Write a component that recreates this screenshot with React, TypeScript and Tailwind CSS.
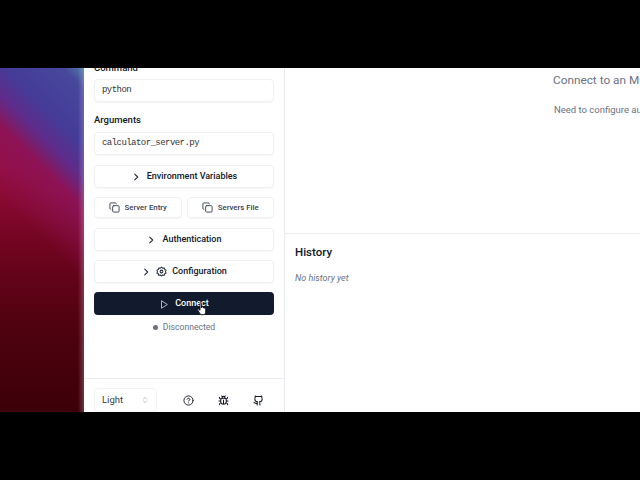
const font = "[font-family:'Roboto',sans-serif]";

function Chevron() {
  return (
    <svg width="10" height="10" viewBox="0 0 24 24" fill="none" stroke="#1f2937" strokeWidth="2.6" strokeLinecap="round" strokeLinejoin="round">
      <path d="m9 5 7 7-7 7" />
    </svg>
  );
}

function Copy() {
  return (
    <svg width="11" height="11" viewBox="0 0 24 24" fill="none" stroke="#374151" strokeWidth="2" strokeLinecap="round" strokeLinejoin="round">
      <rect x="8" y="8" width="14" height="14" rx="2" />
      <path d="M4 16c-1.100 0-2-.9-2-2V4c0-1.100.9-2 2-2h10c1.100 0 2 .9 2 2" />
    </svg>
  );
}

function Cog() {
  return (
    <svg width="11" height="11" viewBox="0 0 24 24" fill="none" stroke="#1f2937" strokeWidth="2.200" strokeLinecap="round" strokeLinejoin="round">
      <path d="M12 2.500l2.600 2.300 3.400-.6.900 3.300 3.100 1.500-1.200 3.200 1.200 3.200-3.100 1.500-.9 3.300-3.400-.6-2.600 2.300-2.600-2.300-3.400.6-.9-3.300-3.100-1.500 1.200-3.200-1.200-3.200 3.100-1.500.9-3.300 3.400.6z" />
      <circle cx="12" cy="12" r="3" />
    </svg>
  );
}

function Field({ value }: { value: string }) {
  return (
    <div className="h-[23px] rounded border border-[#eef0f2] shadow-[0_1px_1px_rgba(0,0,0,0.04)] flex items-center px-[7px] pt-[1px] font-['Liberation_Mono',monospace] text-[9px] tracking-[-0.55px] text-[#333]">
      {value}
    </div>
  );
}

function Collapsible({ children }: { children: React.ReactNode }) {
  return (
    <div className="h-[23px] rounded border border-[#eef0f2] shadow-[0_1px_1px_rgba(0,0,0,0.04)] flex items-center justify-center text-[9px] font-medium text-[#111827]">
      {children}
    </div>
  );
}

function Hand() {
  return (
    <svg className="absolute left-[197px] top-[302px]" width="10" height="14" viewBox="0 0 10 14">
      <path d="M3 1.200c.5-.6 1.300-.4 1.400.4V6l.3-1c.6-.4 1.200-.3 1.400.3l.2.6c.6-.3 1.100-.1 1.300.4.6-.2 1.100.2 1.100.8v3c0 1.500-.9 2.600-2.400 2.600H5C3.800 12.700 3.200 12 2.500 11L.7 8c-.3-.6.4-1.200 1-.8L3 8.300z" fill="#fff" stroke="#111" strokeWidth="0.9" />
    </svg>
  );
}

export default function App() {
  return (
    <div className={`relative w-[640px] h-[480px] bg-black overflow-hidden flex flex-col ${font}`}>
      <div className="h-[68px] shrink-0 bg-black" />
      <div className="relative h-[344px] shrink-0 flex bg-white overflow-hidden">
        <div className="w-[84px] shrink-0 relative bg-[linear-gradient(225deg,#4a7fa8_0%,#47489c_5%,#443c98_18%,#5f2c8a_26%,rgba(140,20,90,0.85)_33%,rgba(150,10,60,0)_50%),linear-gradient(180deg,#96124f_0%,#960c3c_30%,#70041f_52%,#4f0210_75%,#3c0008_100%)]">
          <div className="absolute inset-y-0 right-0 w-[6px] bg-[linear-gradient(90deg,rgba(200,190,210,0)_0%,rgba(200,190,210,0.3)_100%)]" />
        </div>
        <aside className="w-[201px] shrink-0 border-r border-[#e8eaed] flex flex-col bg-white">
          <div className="h-[310px] shrink-0 overflow-hidden px-[10px] flex flex-col">
            <div className="-mt-[7px] text-[9.5px] font-medium text-[#111827] h-[14px] leading-[14px]">Command</div>
            <div className="mt-[4px]"><Field value="python" /></div>
            <div className="mt-[11px] text-[9.5px] font-medium text-[#111827] h-[14px] leading-[14px]">Arguments</div>
            <div className="mt-[5px]"><Field value="calculator_server.py" /></div>
            <div className="mt-[10px]">
              <Collapsible>
                <span className="flex items-center gap-[6px]"><Chevron />Environment Variables</span>
              </Collapsible>
            </div>
            <div className="mt-[9px] grid grid-cols-2 gap-[5px]">
              <div className="h-[21px] rounded border border-[#eef0f2] shadow-[0_1px_1px_rgba(0,0,0,0.04)] flex items-center justify-center gap-[5px] text-[7.8px] font-medium text-[#374151]"><Copy />Server Entry</div>
              <div className="h-[21px] rounded border border-[#eef0f2] shadow-[0_1px_1px_rgba(0,0,0,0.04)] flex items-center justify-center gap-[5px] text-[7.8px] font-medium text-[#374151]"><Copy />Servers File</div>
            </div>
            <div className="mt-[10px]">
              <Collapsible>
                <span className="flex items-center gap-[6px]"><Chevron />Authentication</span>
              </Collapsible>
            </div>
            <div className="mt-[9px]">
              <Collapsible>
                <span className="flex items-center gap-[5px]"><Chevron /><Cog />Configuration</span>
              </Collapsible>
            </div>
            <div className="mt-[9px] h-[23px] pt-[1px] rounded bg-[#111b2d] flex items-center justify-center gap-[6px] text-[9px] font-medium text-white">
              <svg width="10" height="11" viewBox="0 0 24 24" fill="none" stroke="#d1d5db" strokeWidth="2" strokeLinejoin="round">
                <path d="M6 3l14 9-14 9z" />
              </svg>
              Connect
            </div>
            <div className="mt-[6px] flex items-center justify-center gap-[5px] text-[8.6px] text-[#6b7280] h-[12px]">
              <span className="w-[5px] h-[5px] rounded-full bg-[#6b7280]" />
              Disconnected
            </div>
          </div>
          <div className="flex-1 border-t border-[#e8eaed] px-[10px] pt-[9px] flex items-start">
            <div className="w-[63px] h-[24px] rounded border border-[#f1f3f5] shadow-[0_1px_1px_rgba(0,0,0,0.04)] flex items-center justify-between px-[7px] text-[9.5px] text-[#374151]">
              Light
              <svg width="8" height="10" viewBox="0 0 24 24" fill="none" stroke="#9ca3af" strokeWidth="2" strokeLinecap="round" strokeLinejoin="round">
                <path d="m7 15 5 5 5-5M7 9l5-5 5 5" />
              </svg>
            </div>
            <div className="ml-[26px] mt-[1px] flex items-center gap-[24px] h-[22px]">
              <svg width="11" height="11" viewBox="0 0 24 24" fill="none" stroke="#111827" strokeWidth="2" strokeLinecap="round" strokeLinejoin="round">
                <circle cx="12" cy="12" r="10" />
                <path d="M9.100 9a3 3 0 0 1 5.800 1c0 2-3 3-3 3M12 17h.01" />
              </svg>
              <svg width="11" height="11" viewBox="0 0 24 24" fill="none" stroke="#111827" strokeWidth="2.200" strokeLinecap="round" strokeLinejoin="round">
                <path d="M8 2l1.900 1.900M16 2l-1.900 1.900M9 7.100V6a3 3 0 1 1 6 0v1.100" />
                <path d="M12 20c-3.300 0-6-2.700-6-6v-3a4 4 0 0 1 4-4h4a4 4 0 0 1 4 4v3c0 3.300-2.700 6-6 6zM12 20v-9M6.500 9C4.600 8.800 3 7.100 3 5M6 13H2M3 21c0-2.100 1.700-3.900 3.800-4M21 5c0 2.100-1.600 3.800-3.500 4M22 13h-4M17.200 17c2.100.1 3.800 1.900 3.800 4" />
              </svg>
              <svg width="11" height="11" viewBox="0 0 24 24" fill="none" stroke="#111827" strokeWidth="2.200" strokeLinecap="round" strokeLinejoin="round">
                <path d="M15 22v-4a4.800 4.800 0 0 0-1-3.500c3 0 6-2 6-5.500.080-1.250-.270-2.480-1-3.500.280-1.150.280-2.350 0-3.500 0 0-1 0-3 1.500-2.640-.5-5.360-.5-8 0C6 2 5 2 5 2c-.3 1.150-.3 2.350 0 3.500A5.400 5.400 0 0 0 4 9c0 3.500 3 5.500 6 5.500-.390.490-.680 1.050-.850 1.650-.170.600-.220 1.230-.150 1.850v4" />
                <path d="M9 18c-4.510 2-5-2-7-2" />
              </svg>
            </div>
          </div>
        </aside>
        <main className="flex-1 flex flex-col overflow-hidden">
          <div className="h-[166px] shrink-0 border-b border-[#eceef0] relative overflow-hidden">
            <div className="pl-[268px] pt-[4px] whitespace-nowrap">
              <div className="text-[11.8px] leading-[17px] text-[#6b7280]">Connect to an MCP server to start inspecting</div>
              <div className="mt-[14px] ml-[1px] text-[9.5px] leading-[14px] text-[#6b7280]">Need to configure authentication?</div>
            </div>
          </div>
          <div className="px-[10px] pt-[10px]">
            <div className="text-[11.5px] leading-[17px] font-medium text-[#111827]">History</div>
            <div className="mt-[11px] text-[9px] leading-[12px] italic text-[#6b7280]">No history yet</div>
          </div>
        </main>
      </div>
      <div className="h-[68px] shrink-0 bg-black" />
      <Hand />
    </div>
  );
}
